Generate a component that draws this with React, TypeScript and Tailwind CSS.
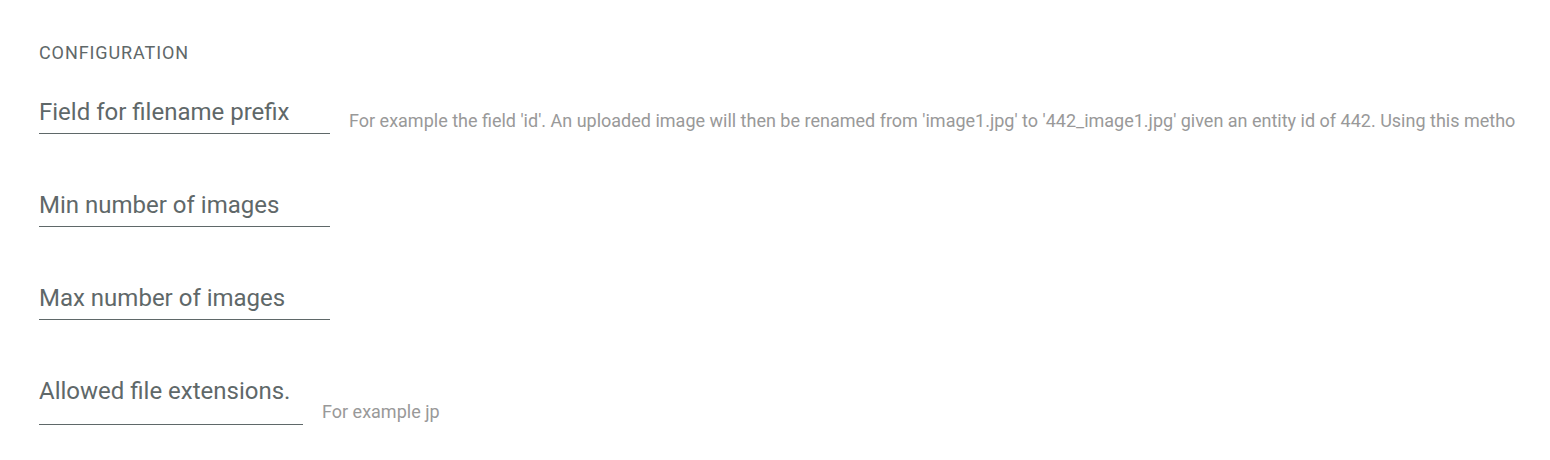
import React from 'react';

const fields = [
  {
    label: 'Field for filename prefix',
    width: 'w-[291px]',
    help: "For example the field 'id'. An uploaded image will then be renamed from 'image1.jpg' to '442_image1.jpg' given an entity id of 442. Using this metho",
    pad: 'pb-[6px]',
  },
  { label: 'Min number of images', width: 'w-[291px]', help: '', pad: 'pb-[6px]' },
  { label: 'Max number of images', width: 'w-[291px]', help: '', pad: 'pb-[6px]' },
  { label: 'Allowed file extensions.', width: 'w-[264px]', help: 'For example jp', pad: 'pb-[18px]' },
];

function ConfigField({ label, width, help, pad }: { label: string; width: string; help: string; pad: string }) {
  return (
    <div className="flex items-end gap-[19px]">
      <input
        type="text"
        placeholder={label}
        className={`${width} ${pad} shrink-0 bg-transparent border-b border-[#5f6869] text-[24px] leading-[30px] text-[#5f6869] placeholder:text-[#5f6869] outline-none`}
      />
      {help && (
        <p className="text-[18px] leading-5 text-[#999999] whitespace-nowrap pb-[3px]">
          {help}
        </p>
      )}
    </div>
  );
}

export default function App() {
  return (
    <div className="min-h-screen bg-white pl-[39px] pt-[43px]" style={{ fontFamily: 'Roboto, "Liberation Sans", sans-serif' }}>
      <h3 className="text-[18px] leading-5 tracking-[0.05em] text-[#5f6869] uppercase">Configuration</h3>
      <div className="mt-[34px] flex flex-col gap-[56px]">
        {fields.map((f) => (
          <ConfigField key={f.label} {...f} />
        ))}
      </div>
    </div>
  );
}
